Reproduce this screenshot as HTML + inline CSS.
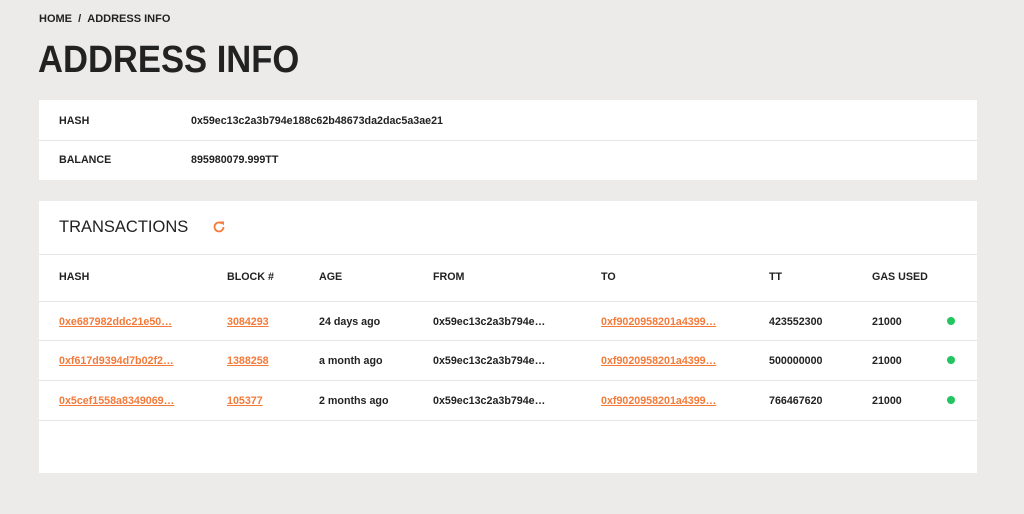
<!DOCTYPE html>
<html><head><style>
body{margin:0;width:1024px;height:514px;background:#ecebea;font-family:"Liberation Sans",Arial,sans-serif;color:#222;position:relative;overflow:hidden}
.a{position:absolute;white-space:nowrap}
.s{font-size:10.7px;font-weight:bold;line-height:14px}
.card{position:absolute;left:39px;width:938px;background:#fff}
.hr{position:absolute;left:0;width:938px;height:1px;background:#e6e6e6}
.l{color:#f47a3a;text-decoration:underline}
.dot{position:absolute;width:8px;height:8px;border-radius:50%;background:#22c55e}
</style></head><body>
<div class="a s" style="left:39px;top:12px;font-size:11px">HOME&nbsp; / &nbsp;ADDRESS INFO</div>
<div class="a" style="left:38px;top:38px;font-size:38px;font-weight:bold;line-height:44px;transform:scaleX(0.91);transform-origin:0 0">ADDRESS INFO</div>
<div class="card" style="top:100px;height:80px">
<div class="a s" style="left:20px;top:14px">HASH</div>
<div class="a s" style="left:152px;top:14px">0x59ec13c2a3b794e188c62b48673da2dac5a3ae21</div>
<div class="hr" style="top:40px"></div>
<div class="a s" style="left:20px;top:53px">BALANCE</div>
<div class="a s" style="left:152px;top:53px">895980079.999TT</div>
</div>
<div class="card" style="top:201px;height:272px">
<div class="a" style="left:20px;top:16px;font-size:16.5px;line-height:20px">TRANSACTIONS</div>
<svg class="a" style="left:173px;top:19px" width="14" height="14" viewBox="0 0 14 14"><path d="M11.5 7A4.5 4.5 0 1 1 10 3.6" fill="none" stroke="#f47a3a" stroke-width="1.8"/><path d="M8 1.5h4v4z" fill="#f47a3a"/></svg>
<div class="hr" style="top:53px"></div>
<div class="a s" style="left:20px;top:69px">HASH</div>
<div class="a s" style="left:188px;top:69px">BLOCK #</div>
<div class="a s" style="left:280px;top:69px">AGE</div>
<div class="a s" style="left:394px;top:69px">FROM</div>
<div class="a s" style="left:562px;top:69px">TO</div>
<div class="a s" style="left:730px;top:69px">TT</div>
<div class="a s" style="left:833px;top:69px">GAS USED</div>
<div class="hr" style="top:100px"></div>

<div class="a s l" style="left:20px;top:114px">0xe687982ddc21e50…</div>
<div class="a s l" style="left:188px;top:114px">3084293</div>
<div class="a s" style="left:280px;top:114px">24 days ago</div>
<div class="a s" style="left:394px;top:114px">0x59ec13c2a3b794e…</div>
<div class="a s l" style="left:562px;top:114px">0xf9020958201a4399…</div>
<div class="a s" style="left:730px;top:114px">423552300</div>
<div class="a s" style="left:833px;top:114px">21000</div>
<div class="dot" style="left:908px;top:116px"></div>
<div class="hr" style="top:139px"></div>

<div class="a s l" style="left:20px;top:153px">0xf617d9394d7b02f2…</div>
<div class="a s l" style="left:188px;top:153px">1388258</div>
<div class="a s" style="left:280px;top:153px">a month ago</div>
<div class="a s" style="left:394px;top:153px">0x59ec13c2a3b794e…</div>
<div class="a s l" style="left:562px;top:153px">0xf9020958201a4399…</div>
<div class="a s" style="left:730px;top:153px">500000000</div>
<div class="a s" style="left:833px;top:153px">21000</div>
<div class="dot" style="left:908px;top:155px"></div>
<div class="hr" style="top:179px"></div>

<div class="a s l" style="left:20px;top:193px">0x5cef1558a8349069…</div>
<div class="a s l" style="left:188px;top:193px">105377</div>
<div class="a s" style="left:280px;top:193px">2 months ago</div>
<div class="a s" style="left:394px;top:193px">0x59ec13c2a3b794e…</div>
<div class="a s l" style="left:562px;top:193px">0xf9020958201a4399…</div>
<div class="a s" style="left:730px;top:193px">766467620</div>
<div class="a s" style="left:833px;top:193px">21000</div>
<div class="dot" style="left:908px;top:195px"></div>
<div class="hr" style="top:219px"></div>
</div>
</body></html>
